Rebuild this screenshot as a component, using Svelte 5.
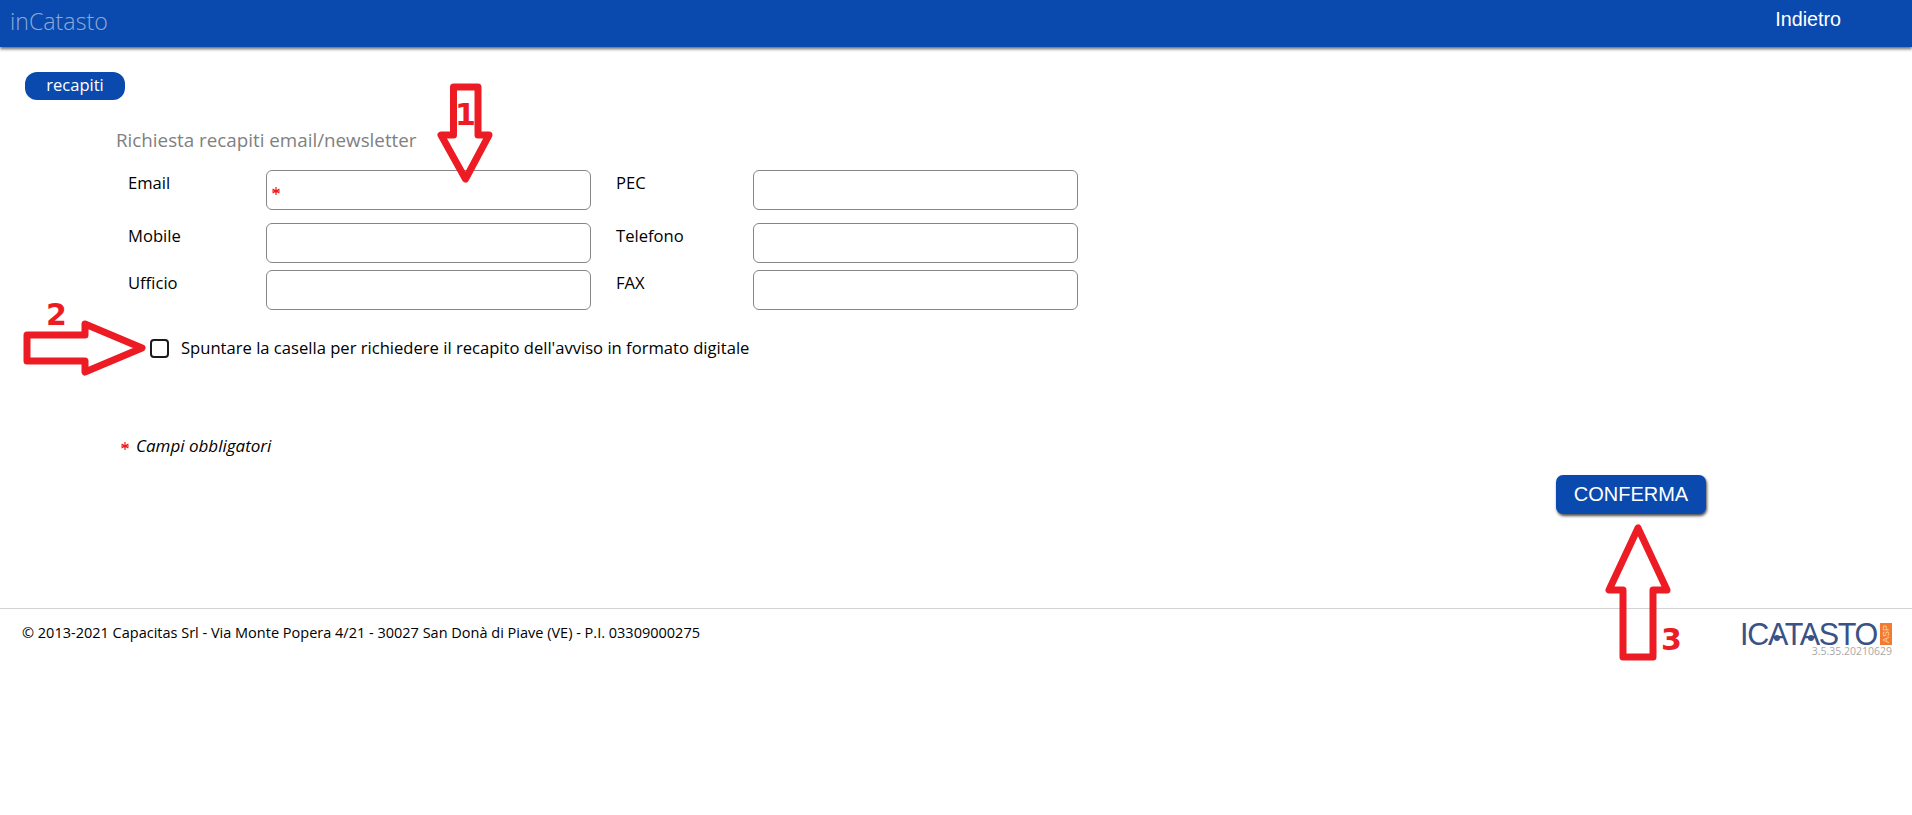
<script>
  const rows = [
    [{ label: 'Email', required: true }, { label: 'PEC' }],
    [{ label: 'Mobile' }, { label: 'Telefono' }],
    [{ label: 'Ufficio' }, { label: 'FAX' }]
  ];
</script>

<div class="page">
  <header class="topbar">
    <span class="brand">inCatasto</span>
    <span class="back">Indietro</span>
  </header>

  <main class="content">
    <div class="pill">recapiti</div>
    <h2 class="title">Richiesta recapiti email/newsletter</h2>

    <div class="grid">
      {#each rows as row}
        {#each row as f, i}
          <label class="lbl" class:second={i === 1} for={f.label}>{f.label}</label>
          <div class="field">
            <input id={f.label} type="text" />
            {#if f.required}
              <svg class="star in" viewBox="0 0 10 10"><path d="M5 0v10M0.7 2.5l8.6 5M0.7 7.5l8.6-5M0 5h10" /></svg>
            {/if}
          </div>
        {/each}
      {/each}
    </div>

    <div class="check">
      <input type="checkbox" id="dig" />
      <label for="dig">Spuntare la casella per richiedere il recapito dell'avviso in formato digitale</label>
    </div>

    <p class="req">
      <svg class="star" viewBox="0 0 10 10"><path d="M5 0v10M0.7 2.5l8.6 5M0.7 7.5l8.6-5M0 5h10" /></svg>
      <em>Campi obbligatori</em>
    </p>

    <div class="actions"><button type="button">CONFERMA</button></div>
  </main>

  <footer class="footer">
    <span class="copy">© 2013-2021 Capacitas Srl - Via Monte Popera 4/21 - 30027 San Donà di Piave (VE) - P.I. 03309000275</span>
    <div class="logo-box">
      <div class="logo">
        <span class="logo-text">ICATASTO</span>
        <span class="asp"><span>ASP</span></span>
        <i class="dot one"></i>
        <i class="dot two"></i>
      </div>
      <div class="ver">3.5.35.20210629</div>
    </div>
  </footer>

  <svg class="marks" viewBox="0 0 1912 815" width="1912" height="815">
    <path d="M453.5 87H478V135H489L465.5 179L441 135H453.5Z" />
    <path d="M27 335H85V324L142 348L85 372V361H27Z" />
    <path d="M1623 657H1653V590H1667L1638 528L1609 590H1623Z" />
    <text x="455" y="125">1</text>
    <text x="46" y="325">2</text>
    <text x="1661" y="650">3</text>
  </svg>
</div>

<style>
  :global(body) {
    margin: 0;
    background: #fff;
  }
  .page {
    position: relative;
    width: 1912px;
    height: 815px;
    overflow: hidden;
    font-family: "Open Sans", "Noto Sans", sans-serif;
    color: #000;
  }
  .topbar {
    height: 47px;
    background: #0a4aae;
    box-shadow: 0 2px 3px rgba(0, 0, 0, 0.6);
    display: flex;
    align-items: center;
    justify-content: space-between;
    padding: 0 71px 0 10px;
  }
  .brand {
    font-size: 23.2px;
    font-weight: 300;
    color: #8fa9d4;
    margin-top: -6px;
  }
  .back {
    font-family: "Liberation Sans", Arial, sans-serif;
    font-size: 19.7px;
    color: #fff;
    margin-top: -8px;
  }
  .content {
    padding: 25px 0 0 25px;
  }
  .pill {
    width: 100px;
    height: 28px;
    border-radius: 12px;
    background: #0a4aae;
    color: #fff;
    font-size: 16.5px;
    line-height: 26px;
    text-align: center;
  }
  .title {
    margin: 28px 0 0 91px;
    font-size: 18.8px;
    line-height: 24px;
    font-weight: 400;
    color: #808080;
  }
  .grid {
    display: grid;
    grid-template-columns: 138px 325px 162px 325px;
    grid-template-rows: 53px 47px 40px;
    margin: 18px 0 0 103px;
  }
  .lbl {
    font-size: 16.6px;
    line-height: 26px;
  }
  .lbl.second {
    padding-left: 25px;
  }
  .field {
    position: relative;
  }
  .field input {
    box-sizing: border-box;
    width: 100%;
    height: 40px;
    border: 1px solid #858585;
    border-radius: 6px;
    background: #fff;
    display: block;
    outline: none;
  }
  .star {
    width: 8px;
    height: 8px;
    flex: none;
  }
  .star path {
    stroke: #f01a1a;
    stroke-width: 1.5;
    fill: none;
  }
  .star.in {
    position: absolute;
    left: 6px;
    top: 17px;
  }
  .check {
    display: flex;
    align-items: center;
    gap: 12px;
    margin: 25px 0 0 125px;
    font-size: 16.6px;
    line-height: 26px;
  }
  .check input {
    appearance: none;
    box-sizing: border-box;
    width: 19px;
    height: 19px;
    margin: 0;
    border: 2.5px solid #1a1a1a;
    border-radius: 4px;
    background: #fff;
  }
  .req {
    display: flex;
    align-items: center;
    gap: 7px;
    margin: 72px 0 0 96px;
    font-size: 17px;
    line-height: 26px;
  }
  .actions {
    display: flex;
    margin: 16px 0 0 1531px;
  }
  button {
    box-sizing: border-box;
    width: 150px;
    height: 39px;
    border: 0;
    border-radius: 7px;
    background: #0a4aae;
    color: #fff;
    font-family: "Liberation Sans", Arial, sans-serif;
    font-size: 20px;
    box-shadow: 1px 2px 3px rgba(0, 0, 0, 0.7);
    padding: 0;
  }
  .footer {
    position: absolute;
    left: 0;
    right: 0;
    top: 608px;
    border-top: 1px solid #d3d3d3;
    display: flex;
    justify-content: space-between;
    padding: 14px 20px 0 22px;
  }
  .copy {
    font-size: 14.5px;
    line-height: 20px;
  }
  .logo-box {
    width: 150px;
  }
  .logo {
    position: relative;
    display: flex;
    align-items: stretch;
    height: 22px;
    justify-content: space-between;
  }
  .logo-text {
    font-family: "Liberation Sans", Arial, sans-serif;
    font-size: 30.5px;
    line-height: 22px;
    color: #3a5285;
    letter-spacing: -1.3px;
    white-space: nowrap;
    margin-left: -2px;
  }
  .dot {
    position: absolute;
    top: 12px;
    width: 6px;
    height: 6px;
    border-radius: 50%;
    background: #3a5285;
  }
  .dot.one {
    left: 32px;
  }
  .dot.two {
    left: 66px;
  }
  .asp {
    width: 12px;
    background: #f47a30;
    color: #fbd6bd;
    font-family: "Liberation Sans", Arial, sans-serif;
    font-size: 9px;
    display: flex;
    align-items: center;
    justify-content: center;
  }
  .asp span {
    display: block;
    transform: rotate(-90deg);
  }
  .ver {
    font-size: 10.5px;
    line-height: 12px;
    color: #a8a8a8;
    text-align: right;
  }
  .marks {
    position: absolute;
    left: 0;
    top: 0;
    pointer-events: none;
  }
  .marks path {
    fill: none;
    stroke: #ed1c24;
    stroke-width: 7;
    stroke-linejoin: round;
  }
  .marks text {
    fill: #ed1c24;
    font-family: "DejaVu Sans", sans-serif;
    font-weight: 700;
    font-size: 30px;
  }
</style>
